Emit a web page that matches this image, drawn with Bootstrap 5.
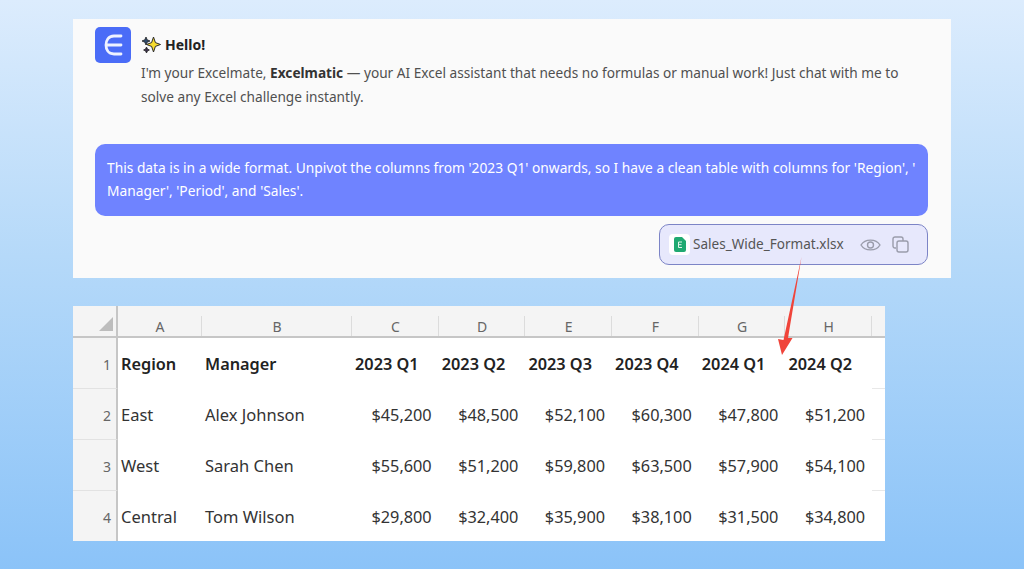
<!DOCTYPE html>
<html lang="en">
<head>
  <meta charset="UTF-8" />
  <title>Excelmatic</title>
  <link href="https://cdn.jsdelivr.net/npm/bootstrap@5.3.0/dist/css/bootstrap.min.css" rel="stylesheet" />
  <style>
    html, body { height: 569px; overflow: hidden; }
    body {
      background: linear-gradient(180deg, #dcecfd 0%, #b5d9f9 45%, #8bc3f8 100%);
      font-family: "Noto Sans", "Liberation Sans", sans-serif;
      padding: 19px 0 0 73px;
      position: relative;
    }
    .chat-panel { width: 878px; height: 259px; background: #fafafa; padding: 8px 23px 0 22px; }
    .logo-box { width: 36px; height: 36px; background: #4a6cf7; border-radius: 5px; flex: none; margin-right: 10px; }
    .hello { font-size: 14px; font-weight: 700; color: #222; line-height: 20px; margin-top: 8px; }
    .intro { font-size: 13.67px; line-height: 24px; color: #505050; margin: 6px 0 0; }
    .intro b { color: #333; }
    .user-bubble {
      background: #6f83ff; color: #fff; border-radius: 10px; height: 72px;
      font-size: 13.77px; line-height: 23px; padding: 12px 12px; margin-top: 35px;
    }
    .file-chip {
      width: 269px; height: 41px; margin-top: 8px; margin-left: auto;
      background: #e7e8fc; border: 1.5px solid #7c84c6; border-radius: 10px;
      padding: 0 18px 0 9px; color: #555; font-size: 13.55px;
    }
    .file-icon { width: 21px; height: 21px; background: #fff; border-radius: 4px; flex: none; margin-right: 3px; }
    .eye-icon { margin-right: 11px; }
    .sheet { width: 812px; height: 235px; margin-top: 28px; background: #fff; }
    .sheet-grid { table-layout: fixed; width: 812px; border-collapse: separate; border-spacing: 0; color: #333; font-size: 16.5px; }
    .sheet-grid th, .sheet-grid td { padding: 0; overflow: hidden; white-space: nowrap; }
    .col-row { width: 45px; }
    .col-a { width: 84px; }
    .col-b { width: 150px; }
    .col-n { width: 86.7px; }
    .head-row th {
      height: 32px; background: #f4f4f4; border-bottom: 2px solid #c6c6c6;
      font-weight: 400; font-size: 14px; line-height: 18px; color: #666; text-align: center;
      padding-top: 11px;
      background-image: linear-gradient(#dcdcdc, #dcdcdc);
      background-size: 1px 20px; background-position: right 10px; background-repeat: no-repeat;
    }
    .head-row th.corner { border-right: 2px solid #c6c6c6; background-image: none; padding-top: 4px; padding-left: 22px; }
    .head-row th.no-tick { background-image: none; }
    .body-row td { height: 51px; vertical-align: middle; padding-top: 2px; }
    .body-row td.tail { border-bottom: 1px solid #e8e8e8; }
    .body-row:last-child td { border-bottom-color: transparent; }
    .body-row td.row-num {
      background: #f4f4f4; border-right: 2px solid #c6c6c6; border-bottom: 1px solid #e2e2e2;
      text-align: right; padding-right: 5px; color: #666; font-size: 14px;
    }
    .body-row td.txt, .body-row td.mgr { padding-left: 3px; }
    .body-row td.num { text-align: right; padding-right: 7px; font-size: 16.3px; }
    .body-row.first td.hd { font-weight: 600; color: #222; font-size: 16.3px; }
    .body-row.first td.num { text-align: left; padding-left: 3px; padding-right: 0; }
    .red-arrow { position: absolute; left: 770px; top: 255px; }
  </style>
</head>
<body>
  <div class="chat-panel">
    <div class="d-flex">
      <div class="logo-box d-flex align-items-center justify-content-center">
        <svg width="24" height="26" viewBox="0 0 24 26" fill="none" stroke="#eef2ff" stroke-width="2.8" stroke-linecap="round">
          <path d="M20 4 H13 C7 4 5 9 5 13 C5 17 7 22 13 22 H20" />
          <path d="M6 13 H20" />
        </svg>
      </div>
      <div class="flex-grow-1">
        <div class="hello d-flex align-items-center">
          <svg width="20" height="18" viewBox="0 0 20 18" class="me-1">
            <path d="M5 1 L6.2 3.8 L9 5 L6.2 6.2 L5 9 L3.8 6.2 L1 5 L3.8 3.8 Z" fill="#2f4a6b" stroke="#222" stroke-width=".8" />
            <path d="M5.5 11 L6.4 13 L8.4 14 L6.4 15 L5.5 17 L4.6 15 L2.6 14 L4.6 13 Z" fill="#3a2f4a" stroke="#222" stroke-width=".8" />
            <path d="M12.5 1 L14.4 6.6 L19.5 8.5 L14.4 10.4 L12.5 16 L10.6 10.4 L5.5 8.5 L10.6 6.6 Z" fill="#f7dc2e" stroke="#2a2a2a" stroke-width="1" />
          </svg>
          <span>Hello!</span>
        </div>
        <p class="intro">I'm your Excelmate, <b>Excelmatic</b> — your AI Excel assistant that needs no formulas or manual work! Just chat with me to<br />solve any Excel challenge instantly.</p>
      </div>
    </div>
    <div class="user-bubble">This data is in a wide format. Unpivot the columns from '2023 Q1' onwards, so I have a clean table with columns for 'Region', '<br />Manager', 'Period', and 'Sales'.</div>
    <div class="file-chip d-flex align-items-center">
      <div class="file-icon d-flex align-items-center justify-content-center">
        <svg width="12" height="15" viewBox="0 0 12 15">
          <path d="M2 0 H8 L12 4 V13 A2 2 0 0 1 10 15 H2 A2 2 0 0 1 0 13 V2 A2 2 0 0 1 2 0 Z" fill="#1fa971" />
          <path d="M8 5 H4.5 V10.5 H8 M4.5 7.7 H7.5" stroke="#dff5ea" stroke-width="1" fill="none" />
        </svg>
      </div>
      <span class="flex-grow-1">Sales_Wide_Format.xlsx</span>
      <svg width="21" height="12" viewBox="0 0 21 12" fill="none" stroke="#9a9cab" stroke-width="1.4" class="eye-icon">
        <path d="M1 6 C5 -.5 16 -.5 20 6 C16 12.5 5 12.5 1 6 Z" />
        <circle cx="10.5" cy="6" r="3" />
      </svg>
      <svg width="17" height="17" viewBox="0 0 17 17" fill="none" stroke="#9a9cab" stroke-width="1.4">
        <path d="M4 12 H3 A2 2 0 0 1 1 10 V3 A2 2 0 0 1 3 1 H9 A2 2 0 0 1 11 3 V5" />
        <rect x="5" y="5" width="11" height="11" rx="2" />
      </svg>
    </div>
  </div>

  <div class="sheet overflow-hidden">
    <table class="sheet-grid">
      <colgroup>
        <col class="col-row" /><col class="col-a" /><col class="col-b" />
        <col class="col-n" /><col class="col-n" /><col class="col-n" /><col class="col-n" /><col class="col-n" /><col class="col-n" />
        <col />
      </colgroup>
      <thead>
        <tr class="head-row">
          <th class="corner">
            <svg width="14" height="14" viewBox="0 0 14 14"><path d="M14 0 V14 H0 Z" fill="#bdbdbd" /></svg>
          </th>
          <th>A</th><th>B</th><th>C</th><th>D</th><th>E</th><th>F</th><th>G</th><th>H</th><th class="no-tick"></th>
        </tr>
      </thead>
      <tbody id="filas"></tbody>
    </table>
  </div>

  <svg class="red-arrow" width="40" height="105" viewBox="0 0 40 105">
    <path d="M31.5 2 L18 83 L22.5 83 L12 100 L8 84 L13.5 85 Z" fill="#f0443a" />
  </svg>

  <script>
    const filas = [
      ["Region", "Manager", "2023 Q1", "2023 Q2", "2023 Q3", "2023 Q4", "2024 Q1", "2024 Q2"],
      ["East", "Alex Johnson", "$45,200", "$48,500", "$52,100", "$60,300", "$47,800", "$51,200"],
      ["West", "Sarah Chen", "$55,600", "$51,200", "$59,800", "$63,500", "$57,900", "$54,100"],
      ["Central", "Tom Wilson", "$29,800", "$32,400", "$35,900", "$38,100", "$31,500", "$34,800"]
    ];
    const tbody = document.getElementById("filas");
    filas.forEach((f, i) => {
      const hd = i === 0 ? " hd" : "";
      const celdas = f.map((v, j) => {
        const cls = j === 0 ? "txt" : j === 1 ? "mgr" : "num";
        return `<td class="${cls}${hd}">${v}</td>`;
      }).join("");
      tbody.innerHTML += `<tr class="body-row${i === 0 ? " first" : ""}"><td class="row-num">${i + 1}</td>${celdas}<td class="tail"></td></tr>`;
    });
  </script>
  <script src="https://cdn.jsdelivr.net/npm/bootstrap@5.3.0/dist/js/bootstrap.bundle.min.js"></script>
</body>
</html>
